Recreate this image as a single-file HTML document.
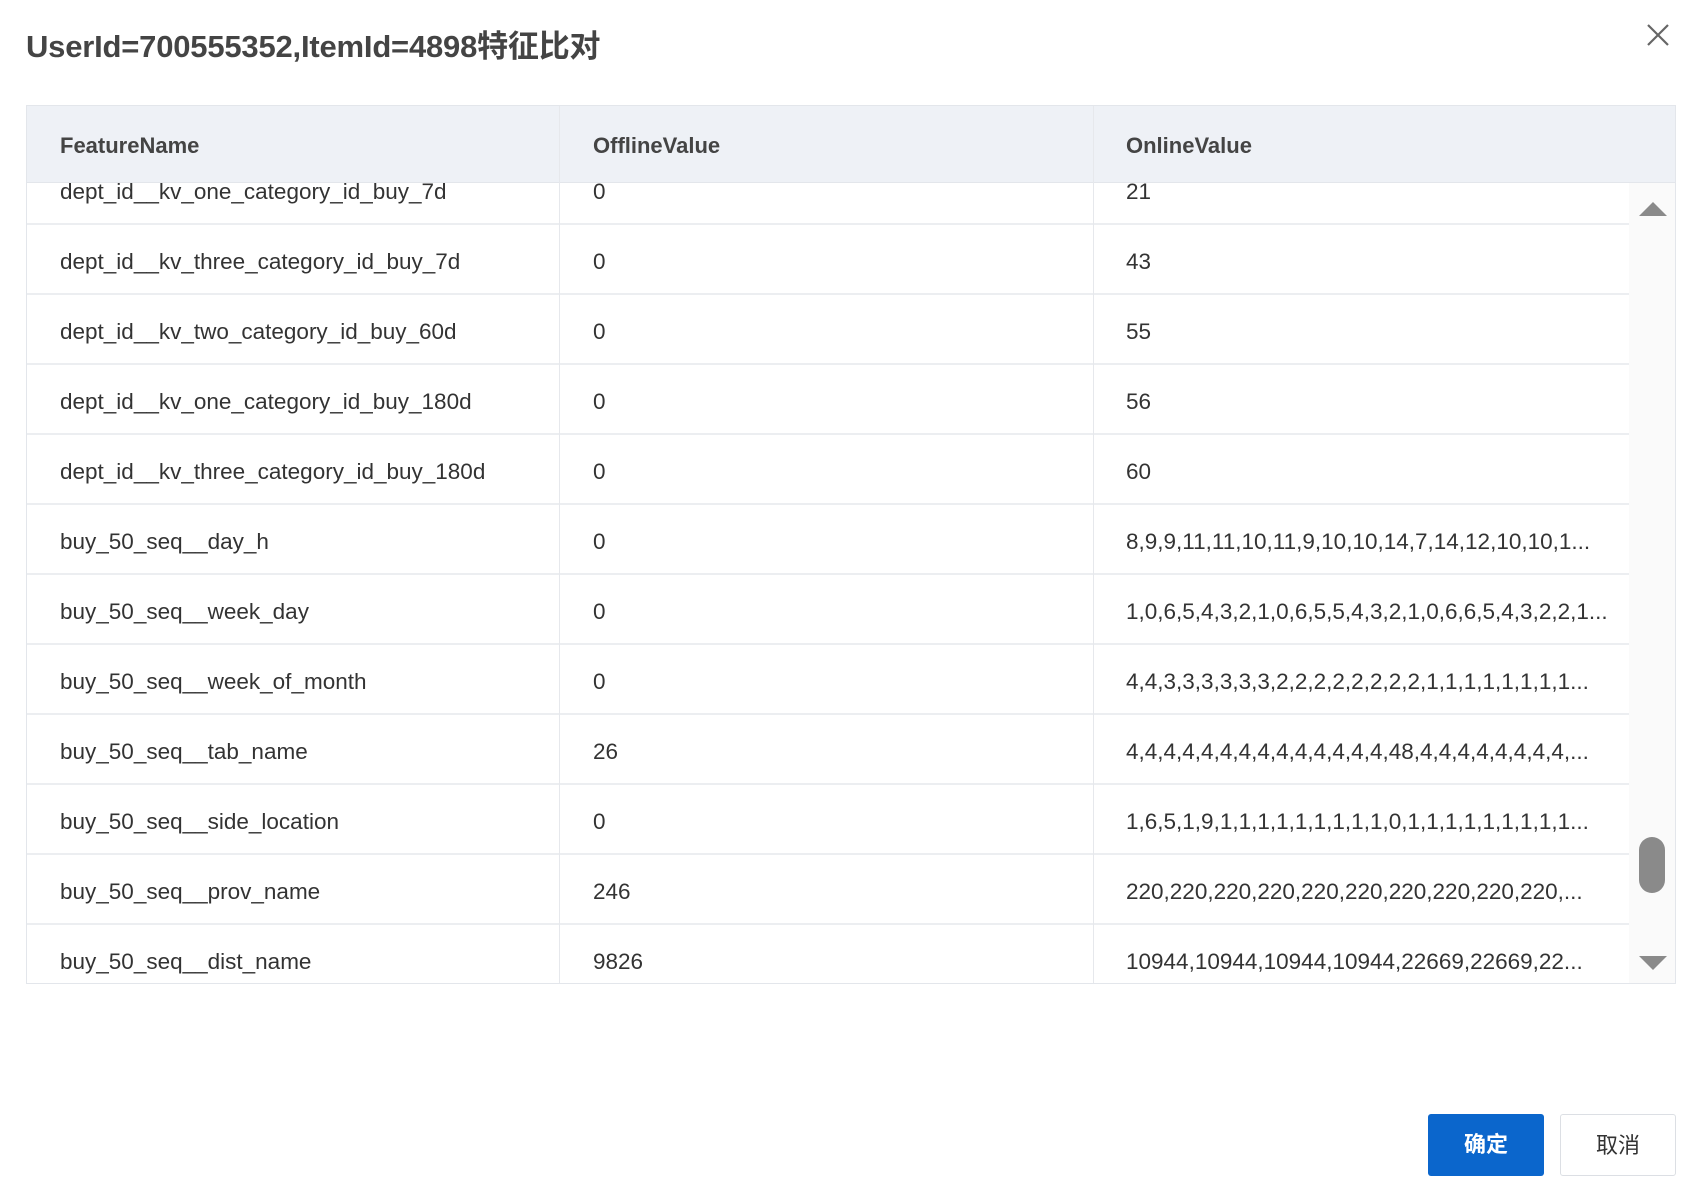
<!DOCTYPE html>
<html><head><meta charset="utf-8"><style>
*{margin:0;padding:0;box-sizing:border-box}
body{width:1698px;height:1196px;background:#fff;position:relative;overflow:hidden;font-family:"Liberation Sans","Noto Sans CJK SC",sans-serif;color:#333}
.title{position:absolute;left:26px;top:21px;font-size:31px;font-weight:bold;color:#444;letter-spacing:-0.2px}
.close{position:absolute;left:1645px;top:22px;width:26px;height:26px}
.tbl{position:absolute;left:26px;top:105px;width:1650px;height:879px;border:1px solid #e3e6eb;overflow:hidden}
.hdr{position:absolute;left:0;top:0;width:1648px;height:77px;background:#eef1f6;border-bottom:1px solid #e3e6eb;z-index:2}
.hdr div{position:absolute;top:1px;line-height:77px;font-size:22px;font-weight:bold;color:#444}
.body{position:absolute;left:0;top:49px;width:1602px}
.row{position:relative;height:70px;border-bottom:2px solid #eceef1}
.row div{position:absolute;top:3px;line-height:68px;font-size:22.5px;color:#333;white-space:nowrap}
.c1{left:33px}.c2{left:566px}.c3{left:1099px}
.vl{position:absolute;top:0;width:1px;height:879px;background:#e6e8ec;z-index:3}
.sb{position:absolute;left:1602px;top:77px;width:46px;height:802px;background:#fafafa;z-index:3}
.btn{position:absolute;top:1114px;height:62px;width:116px;font-size:22px;text-align:center;line-height:62px;border-radius:3px}
</style></head><body>
<div class="title">UserId=700555352,ItemId=4898特征比对</div>
<svg class="close" viewBox="0 0 26 26"><path d="M3 3L23 23M23 3L3 23" stroke="#666" stroke-width="2.2" fill="none"/></svg>
<div class="tbl">
<div class="hdr"><div style="left:33px">FeatureName</div><div style="left:566px">OfflineValue</div><div style="left:1099px">OnlineValue</div></div>
<div class="vl" style="left:532px"></div><div class="vl" style="left:1066px"></div>
<div class="body">
<div class="row"><div class="c1">dept_id__kv_one_category_id_buy_7d</div><div class="c2">0</div><div class="c3">21</div></div>
<div class="row"><div class="c1">dept_id__kv_three_category_id_buy_7d</div><div class="c2">0</div><div class="c3">43</div></div>
<div class="row"><div class="c1">dept_id__kv_two_category_id_buy_60d</div><div class="c2">0</div><div class="c3">55</div></div>
<div class="row"><div class="c1">dept_id__kv_one_category_id_buy_180d</div><div class="c2">0</div><div class="c3">56</div></div>
<div class="row"><div class="c1">dept_id__kv_three_category_id_buy_180d</div><div class="c2">0</div><div class="c3">60</div></div>
<div class="row"><div class="c1">buy_50_seq__day_h</div><div class="c2">0</div><div class="c3">8,9,9,11,11,10,11,9,10,10,14,7,14,12,10,10,1...</div></div>
<div class="row"><div class="c1">buy_50_seq__week_day</div><div class="c2">0</div><div class="c3">1,0,6,5,4,3,2,1,0,6,5,5,4,3,2,1,0,6,6,5,4,3,2,2,1...</div></div>
<div class="row"><div class="c1">buy_50_seq__week_of_month</div><div class="c2">0</div><div class="c3">4,4,3,3,3,3,3,3,2,2,2,2,2,2,2,2,1,1,1,1,1,1,1,1...</div></div>
<div class="row"><div class="c1">buy_50_seq__tab_name</div><div class="c2">26</div><div class="c3">4,4,4,4,4,4,4,4,4,4,4,4,4,4,48,4,4,4,4,4,4,4,4,...</div></div>
<div class="row"><div class="c1">buy_50_seq__side_location</div><div class="c2">0</div><div class="c3">1,6,5,1,9,1,1,1,1,1,1,1,1,1,0,1,1,1,1,1,1,1,1,1...</div></div>
<div class="row"><div class="c1">buy_50_seq__prov_name</div><div class="c2">246</div><div class="c3">220,220,220,220,220,220,220,220,220,220,...</div></div>
<div class="row"><div class="c1">buy_50_seq__dist_name</div><div class="c2">9826</div><div class="c3">10944,10944,10944,10944,22669,22669,22...</div></div>
</div>
<div class="sb">
<svg style="position:absolute;left:10px;top:18px" width="28" height="16"><path d="M0 15L14 1L28 15Z" fill="#8a8a8a"/></svg>
<div style="position:absolute;left:10px;top:654px;width:26px;height:56px;background:#8a8a8a;border-radius:13px"></div>
<svg style="position:absolute;left:10px;top:772px" width="28" height="16"><path d="M0 1L14 15L28 1Z" fill="#8a8a8a"/></svg>
</div>
</div>
<div class="btn" style="left:1428px;background:#0b66cc;color:#fff;font-weight:bold">确定</div>
<div class="btn" style="left:1560px;border:1px solid #dcdfe4;color:#333">取消</div>
</body></html>
